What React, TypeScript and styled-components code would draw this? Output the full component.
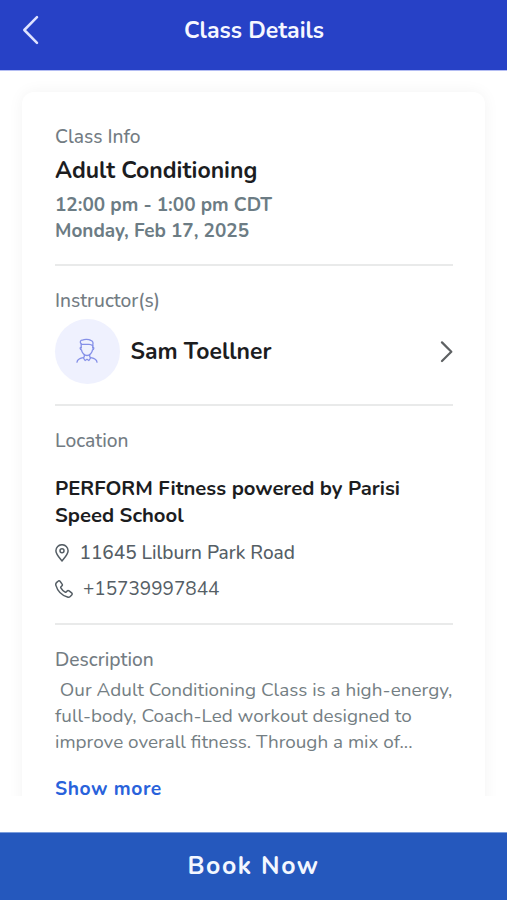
import React from "react";
import styled, { createGlobalStyle } from "styled-components";

const GlobalStyle = createGlobalStyle`
  *, *::before, *::after { box-sizing: border-box; }
  body { margin: 0; background: #fff; font-family: Nunito, Lato, sans-serif; }
  h1, h2, h3, p { margin: 0; }
  button { border: 0; padding: 0; background: none; font-family: inherit; cursor: pointer; }
`;

const Screen = styled.div`
  display: flex;
  flex-direction: column;
  width: 100%;
  height: 900px;
  overflow: hidden;
  background: #fff;
`;

const Header = styled.header`
  display: grid;
  grid-template-columns: 62px 1fr 62px;
  flex: none;
  height: 71px;
  padding-bottom: 10px;
  align-items: center;
  background: #2741c6;
  border-bottom: 1px solid #b4bdf3;
`;

const BackButton = styled.button`
  display: flex;
  justify-content: center;
  color: #dfe3ff;
`;

const HeaderTitle = styled.h1`
  padding-top: 2px;
  padding-left: 1px;
  color: #f6f7ff;
  font-size: 23.05px;
  font-weight: 700;
  line-height: 30px;
  text-align: center;
`;

const Content = styled.main`
  flex: none;
  height: 725px;
  padding: 21px 22px 0;
  overflow: hidden;
`;

const Card = styled.article`
  height: 760px;
  padding: 33px 32px 0 33px;
  border-radius: 12px;
  background: #fff;
  box-shadow: 0 0 16px rgba(0, 0, 0, 0.05);
`;

const Section = styled.section<{ $end?: number }>`
  padding-bottom: ${(p) => p.$end ?? 0}px;

  & + & {
    padding-top: 23px;
    border-top: 2px solid #e9eaea;
  }
`;

const Label = styled.h2`
  color: #737c83;
  font-size: 19.2px;
  font-weight: 500;
  line-height: 24px;
`;

const ClassName = styled.h3`
  margin-top: 4px;
  color: #1c1d1f;
  font-size: 23px;
  font-weight: 700;
  line-height: 36px;
`;

const Schedule = styled.div`
  margin-top: 4px;
`;

const ScheduleLine = styled.p`
  color: #6c7c84;
  font-size: 18.95px;
  font-weight: 700;
  line-height: 25.5px;
`;

const InstructorRow = styled.button`
  display: flex;
  align-items: center;
  width: 100%;
  margin-top: 6px;
`;

const Avatar = styled.span`
  display: flex;
  align-items: center;
  justify-content: center;
  width: 65px;
  height: 65px;
  padding: 0 1px 2px 0;
  border-radius: 50%;
  background: #eff1fe;
  color: #8590e8;
`;

const InstructorName = styled.span`
  flex: 1;
  margin-left: 10.5px;
  color: #1c1d1f;
  font-size: 22.95px;
  font-weight: 700;
  line-height: 30px;
  text-align: left;
`;

const Venue = styled.h3`
  margin: 22px 0 12px;
  color: #1c1d1f;
  font-size: 20.3px;
  font-weight: 700;
  line-height: 27px;
`;

const Contact = styled.div<{ $gap: number; $size: number; $weight: number }>`
  display: flex;
  align-items: center;
  gap: ${(p) => p.$gap}px;
  color: #555e65;
  font-size: ${(p) => p.$size}px;
  font-weight: ${(p) => p.$weight};
  line-height: 24px;

  & + & {
    margin-top: 12px;
  }
`;

const Description = styled.p`
  margin-top: 6px;
  color: #747e83;
  font-size: 18.9px;
  line-height: 25.8px;
  white-space: pre;
`;

const ShowMore = styled.button`
  display: block;
  margin-top: 22px;
  color: #2962db;
  font-size: 19.3px;
  font-weight: 700;
  line-height: 24px;
  letter-spacing: 0.55px;
`;

const BookButton = styled.button`
  flex: none;
  height: 68px;
  margin-top: auto;
  padding-bottom: 1px;
  border-top: 1px solid #7b9ddc;
  background: #2558bd;
  color: #f3f7ff;
  font-size: 24.8px;
  font-weight: 700;
  letter-spacing: 1.6px;
`;

function BackIcon() {
  return (
    <svg width="18" height="30" viewBox="0 0 18 30" fill="none" stroke="currentColor" strokeWidth="2.5" strokeLinecap="round" strokeLinejoin="round">
      <path d="M15 2.200 2.300 15 15 27.800" />
    </svg>
  );
}

function ForwardIcon() {
  return (
    <svg width="13" height="22" viewBox="0 0 13 22" fill="none" stroke="#5e6163" strokeWidth="2.2" strokeLinecap="round" strokeLinejoin="round">
      <path d="M2 1.400 11.300 10.700 2 20" />
    </svg>
  );
}

function PersonIcon() {
  return (
    <svg width="22" height="26" viewBox="0 0 22 26" fill="none" stroke="currentColor" strokeWidth="1.3" strokeLinecap="round" strokeLinejoin="round">
      <path d="M5.200 5.800C3.600 4.400 4.300 1.900 6.300 2.200c2.200-1.200 6.300-1.100 8.500.2 2 .4 2.600 2.400 2 4.400v3.400" />
      <path d="M5.200 5.800v4.200M5.400 6.300h7.700c1.500 0 2.600.4 3.700 1.600" />
      <path d="M5.100 9.300c-1.300-.2-1.200 2.300.4 2.500.4 3 2.700 5.700 5.500 5.700s5.100-2.700 5.500-5.700c1.600-.2 1.700-2.700.4-2.500" />
      <path d="M8.300 16.800v1.700c0 .7-.6 1-1.400 1.200-3.200.7-5.600 1.300-5.900 4.500M13.700 16.800v1.700c0 .7.6 1 1.400 1.200 3.200.7 5.600 1.300 5.900 4.500" />
      <path d="m7.200 19.700 1.900 2.800 1.900-1.300 1.900 1.300 1.900-2.800" />
    </svg>
  );
}

function PinIcon() {
  return (
    <svg width="14" height="18" viewBox="0 0 14 18" fill="none" stroke="currentColor" strokeWidth="1.5" strokeLinejoin="round">
      <path d="M7 17C4.900 14.300.900 10.400.900 6.800a6.100 6.100 0 0 1 12.200 0C13.100 10.400 9.100 14.300 7 17Z" />
      <circle cx="7" cy="6.800" r="2" />
    </svg>
  );
}

function PhoneIcon() {
  return (
    <svg width="18" height="18" viewBox="0 0 24 24" fill="none" stroke="currentColor" strokeWidth="2" strokeLinecap="round" strokeLinejoin="round">
      <path d="M2 3.500 4 1.600c.8-.8 2-.8 2.700.1l2.600 3.500c.7.900.6 2-.2 2.700L8 9c-.4.400-.5.900-.2 1.400 1.300 2.300 3.300 4.300 5.700 5.700.5.300 1 .2 1.400-.2l1.200-1.100c.7-.8 1.800-.9 2.700-.2l3.400 2.600c.9.700.9 1.900.1 2.700l-2 2c-1 1-2.400 1.200-3.700.8C9 20.500 3.500 15 1.200 7.200c-.4-1.300-.2-2.700.8-3.700Z" />
    </svg>
  );
}

export default function App() {
  return (
    <>
      <GlobalStyle />
      <Screen>
        <Header>
          <BackButton aria-label="Back">
            <BackIcon />
          </BackButton>
          <HeaderTitle>Class Details</HeaderTitle>
        </Header>
        <Content>
          <Card>
            <Section $end={20}>
              <Label>Class Info</Label>
              <ClassName>Adult Conditioning</ClassName>
              <Schedule>
                <ScheduleLine>12:00 pm - 1:00 pm CDT</ScheduleLine>
                <ScheduleLine>Monday, Feb 17, 2025</ScheduleLine>
              </Schedule>
            </Section>
            <Section $end={20}>
              <Label>Instructor(s)</Label>
              <InstructorRow>
                <Avatar>
                  <PersonIcon />
                </Avatar>
                <InstructorName>Sam Toellner</InstructorName>
                <ForwardIcon />
              </InstructorRow>
            </Section>
            <Section $end={22}>
              <Label>Location</Label>
              <Venue>PERFORM Fitness powered by Parisi Speed School</Venue>
              <Contact $gap={10.5} $size={19.05} $weight={500}>
                <PinIcon />
                <span>11645 Lilburn Park Road</span>
              </Contact>
              <Contact $gap={10} $size={18.95} $weight={400}>
                <PhoneIcon />
                <span>+15739997844</span>
              </Contact>
            </Section>
            <Section>
              <Label>Description</Label>
              <Description>
                {" Our Adult Conditioning Class is a high-energy,\nfull-body, Coach-Led workout designed to\nimprove overall fitness. Through a mix of..."}
              </Description>
              <ShowMore>Show more</ShowMore>
            </Section>
          </Card>
        </Content>
        <BookButton>Book Now</BookButton>
      </Screen>
    </>
  );
}
